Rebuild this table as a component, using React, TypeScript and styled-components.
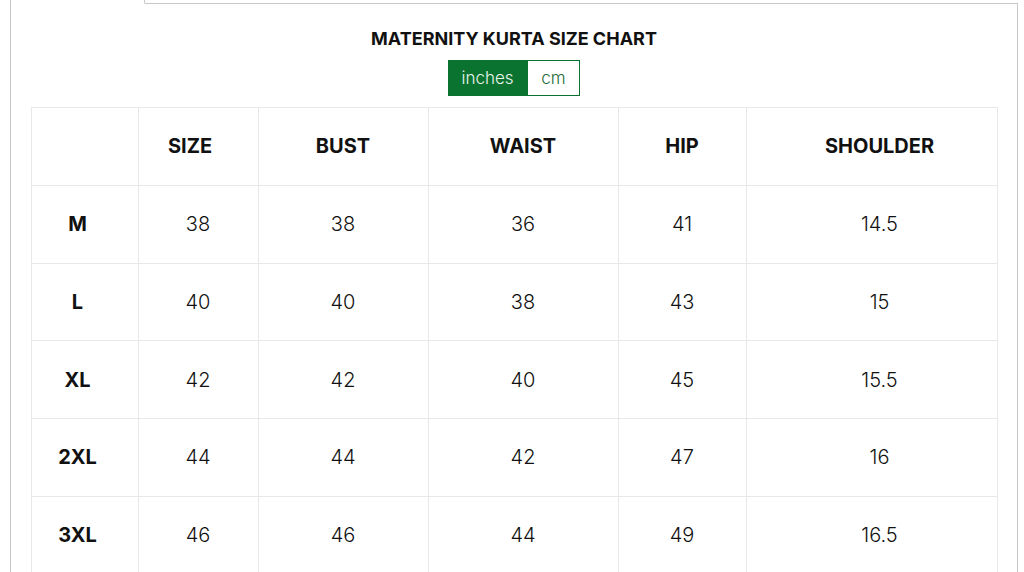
import React, { useState } from "react";
import styled, { createGlobalStyle } from "styled-components";

const Global = createGlobalStyle`
  html, body { margin: 0; padding: 0; background: #fff; }
  body { font-family: Inter, "Noto Sans", sans-serif; color: #111; }
`;

const Frame = styled.div`
  margin-left: 10px;
  width: 1008px;
  border-left: 1px solid #c8c8c8;
  min-height: 572px;
  display: flex;
  flex-direction: column;
  box-sizing: border-box;
`;

const TabStrip = styled.div`
  display: flex;
  height: 4px;
`;

const TabSpacer = styled.div`
  flex: 0 0 133px;
`;

const TabRest = styled.div`
  flex: 1;
  border-left: 1px solid #c8c8c8;
  border-bottom: 1px solid #c8c8c8;
  border-bottom-left-radius: 2px;
`;

const Content = styled.div`
  flex: 1;
  border-right: 1px solid #c8c8c8;
  padding: 0 20px 0 20px;
  display: flex;
  flex-direction: column;
  align-items: center;
`;

const Title = styled.h2`
  margin: 23px 0 0;
  font-size: 18px;
  line-height: 24px;
  font-weight: 700;
  color: #111;
  letter-spacing: 0;
`;

const Toggle = styled.div`
  display: flex;
  margin-top: 9px;
  height: 36px;
`;

const ToggleButton = styled.button<{ $active: boolean; $w: number }>`
  font-family: Inter, "Noto Sans", sans-serif;
  font-size: 17px;
  font-weight: 300;
  padding: 0;
  width: ${(p) => p.$w}px;
  height: 36px;
  box-sizing: border-box;
  border: 1px solid #0b7330;
  background: ${(p) => (p.$active ? "#0b7330" : "#fff")};
  color: ${(p) => (p.$active ? "#e8f3ec" : "#1d6a38")};
  cursor: pointer;
`;

const Table = styled.table`
  margin-top: 11px;
  border-collapse: collapse;
  width: 966px;
  table-layout: fixed;
`;

const Cell = styled.td<{ $head?: boolean; $shift?: number }>`
  border: 1px solid #e8e8e8;
  height: 76.75px;
  padding: 0;
  padding-left: ${(p) => (p.$shift && p.$shift > 0 ? p.$shift * 2 : 0)}px;
  padding-right: ${(p) => (p.$shift && p.$shift < 0 ? -p.$shift * 2 : 0)}px;
  text-align: center;
  font-size: 20px;
  font-weight: ${(p) => (p.$head ? 700 : 300)};
  color: #111;
`;

const cols = [107, 120, 170, 190, 128, 251];
const headers = ["", "SIZE", "BUST", "WAIST", "HIP", "SHOULDER"];
const headShift = [-7, -8, 0, 0, 0, 8];
const bodyShift = [-7, 0, 0, 0, 0, 8];
const rows = [
  ["M", "38", "38", "36", "41", "14.5"],
  ["L", "40", "40", "38", "43", "15"],
  ["XL", "42", "42", "40", "45", "15.5"],
  ["2XL", "44", "44", "42", "47", "16"],
  ["3XL", "46", "46", "44", "49", "16.5"],
];

export default function App() {
  const [unit, setUnit] = useState<"in" | "cm">("in");
  return (
    <>
      <Global />
      <Frame>
        <TabStrip>
          <TabSpacer />
          <TabRest />
        </TabStrip>
        <Content>
          <Title>MATERNITY KURTA SIZE CHART</Title>
          <Toggle>
            <ToggleButton $active={unit === "in"} $w={79} onClick={() => setUnit("in")}>
              inches
            </ToggleButton>
            <ToggleButton $active={unit === "cm"} $w={53} onClick={() => setUnit("cm")}>
              cm
            </ToggleButton>
          </Toggle>
          <Table>
            <colgroup>
              {cols.map((w, i) => (
                <col key={i} style={{ width: w }} />
              ))}
            </colgroup>
            <tbody>
              <tr>
                {headers.map((h, i) => (
                  <Cell key={i} $head $shift={headShift[i]}>
                    {h}
                  </Cell>
                ))}
              </tr>
              {rows.map((r) => (
                <tr key={r[0]}>
                  {r.map((v, i) => (
                    <Cell key={i} $head={i === 0} $shift={bodyShift[i]}>
                      {v}
                    </Cell>
                  ))}
                </tr>
              ))}
            </tbody>
          </Table>
        </Content>
      </Frame>
    </>
  );
}
